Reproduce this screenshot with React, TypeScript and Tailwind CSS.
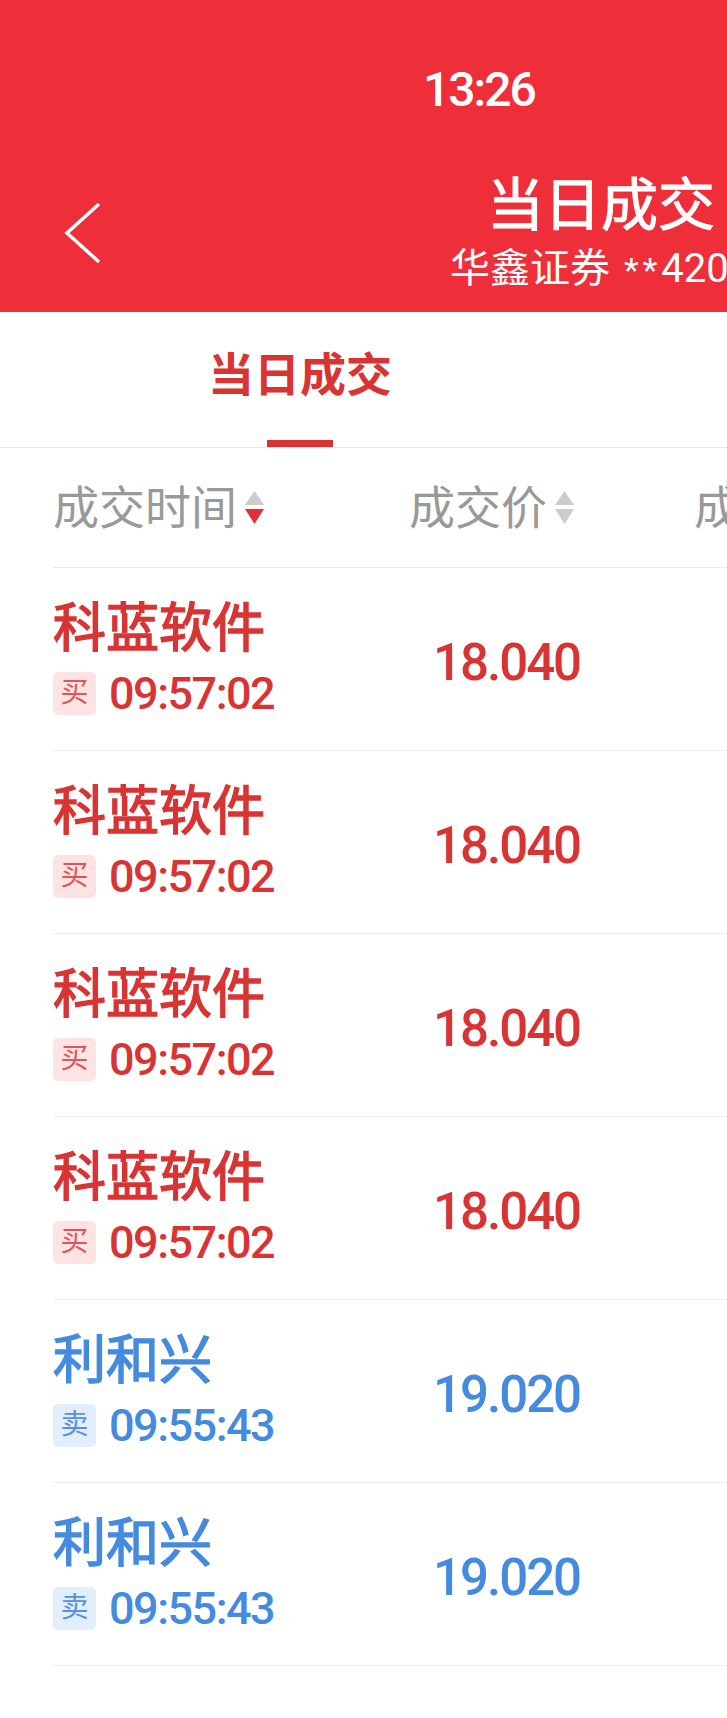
import { type ReactNode } from 'react'

type Trade = { name: string; side: 'buy' | 'sell'; time: string; price: string }

const trades: Trade[] = [
  { name: '科蓝软件', side: 'buy', time: '09:57:02', price: '18.040' },
  { name: '科蓝软件', side: 'buy', time: '09:57:02', price: '18.040' },
  { name: '科蓝软件', side: 'buy', time: '09:57:02', price: '18.040' },
  { name: '科蓝软件', side: 'buy', time: '09:57:02', price: '18.040' },
  { name: '利和兴', side: 'sell', time: '09:55:43', price: '19.020' },
  { name: '利和兴', side: 'sell', time: '09:55:43', price: '19.020' },
]

function SortIcon({ active }: { active?: 'down' | 'up' }) {
  return (
    <svg width="19" height="33" viewBox="0 0 19 33" className="ml-2 shrink-0">
      <polygon points="9.5,0 19,14 0,14" fill={active === 'up' ? '#d93434' : '#cccccc'} />
      <polygon points="0,18 19,18 9.5,33" fill={active === 'down' ? '#e03036' : '#cccccc'} />
    </svg>
  )
}

function HeadCell({ children, width }: { children: ReactNode; width: string }) {
  return <div className={`flex shrink-0 items-center ${width}`}>{children}</div>
}

function Row({ t }: { t: Trade }) {
  const buy = t.side === 'buy'
  const color = buy ? 'text-[#d93434]' : 'text-[#448bdf]'
  return (
    <div className="flex h-[183px] items-center border-b border-[#ebebeb]">
      <div className="flex w-[356px] shrink-0 flex-col">
        <div className={`text-[53px] leading-none [-webkit-text-stroke:1.5px] ${color}`}>{t.name}</div>
        <div className="mt-[15px] flex items-center">
          <span
            className={`grid h-[43px] w-[43px] place-items-center rounded-[5px] text-[28px] leading-none ${
              buy ? 'bg-[#fde3e3] text-[#e0555a]' : 'bg-[#e2eefc] text-[#5592dd]'
            }`}
          >
            {buy ? '买' : '卖'}
          </span>
          <span className={`ml-[13px] text-[45px] font-medium leading-none tracking-[-1.5px] ${color}`}>{t.time}</span>
        </div>
      </div>
      <div className="w-[285px] shrink-0 pl-[24px]">
        <div className={`mt-[6px] text-[51px] font-medium leading-none tracking-[-2px] ${color}`}>{t.price}</div>
      </div>
    </div>
  )
}

export default function App() {
  return (
    <div className="h-[1718px] w-[727px] overflow-hidden bg-white font-['Roboto','Noto_Sans_CJK_SC',sans-serif]">
      {/* header */}
      <header className="h-[312px] bg-[#ee2f3a] text-white">
        <div className="pl-[423px] pt-[66px] text-[48px] font-medium leading-none tracking-[-2px]">13:26</div>
        <div className="mt-[63px] flex items-start">
          <svg width="40" height="62" viewBox="0 0 40 62" className="ml-[63px] mt-[25px] shrink-0">
            <polyline points="36,2 4,31 36,60" fill="none" stroke="white" strokeWidth="3.5" />
          </svg>
          <div className="ml-[347px] flex shrink-0 flex-col whitespace-nowrap">
            <div className="pl-[37px] text-[57px] leading-none [-webkit-text-stroke:1px]">当日成交</div>
            <div className="mt-[15px] flex items-baseline text-[40px] leading-none">
              华鑫证券
              <span className="ml-[14px] text-[34px] tracking-[4px]">**</span>
              <span>420</span>
            </div>
          </div>
        </div>
      </header>

      {/* tabs */}
      <div className="flex h-[136px] border-b border-[#e8e8e8]">
        <div className="flex w-[600px] flex-col items-center">
          <div className="pt-[40px] text-[46px] font-bold leading-none text-[#d93434]">当日成交</div>
          <div className="mt-auto h-[7px] w-[66px] bg-[#d93434]" />
        </div>
      </div>

      {/* table */}
      <div className="pl-[53px]">
        <div className="flex h-[120px] items-center whitespace-nowrap border-b border-[#ebebeb] text-[46px] leading-none text-[#999999]">
          <HeadCell width="w-[356px]">
            成交时间
            <SortIcon active="down" />
          </HeadCell>
          <HeadCell width="w-[285px]">
            成交价
            <SortIcon />
          </HeadCell>
          <HeadCell width="w-[200px]">成交量</HeadCell>
        </div>
        {trades.map((t, i) => (
          <Row key={i} t={t} />
        ))}
      </div>
    </div>
  )
}
